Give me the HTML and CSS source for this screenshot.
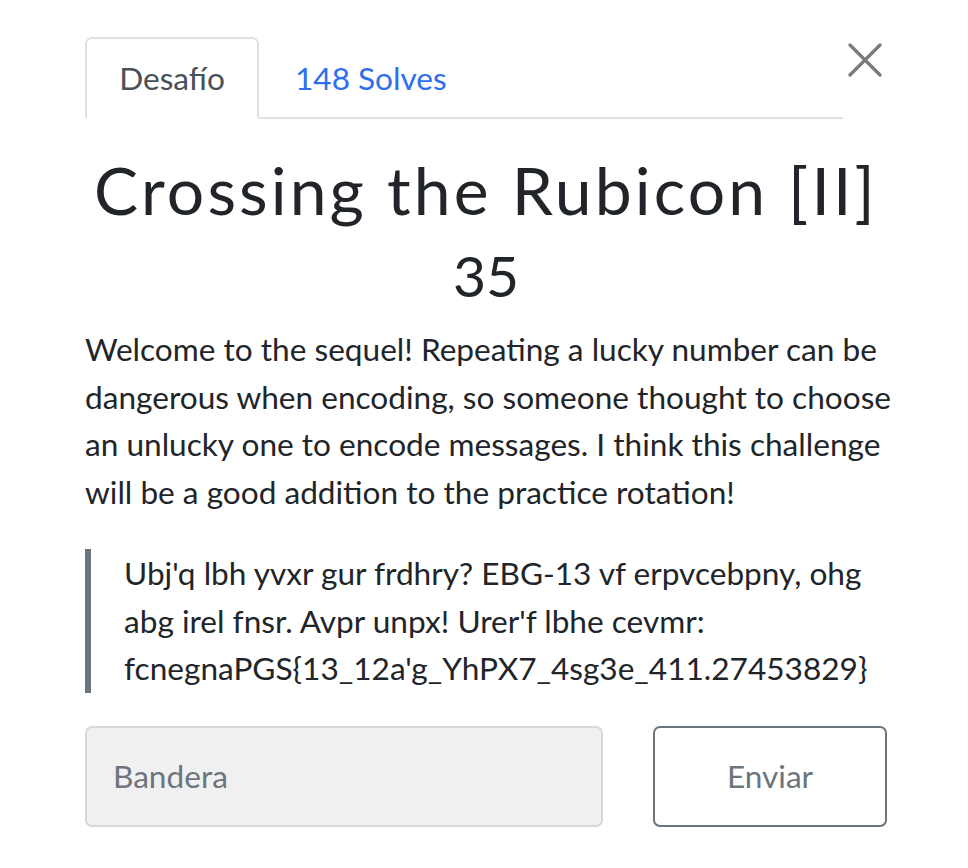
FILE: index.html
```html
<!DOCTYPE html>
<html lang="es">
<head>
<meta charset="utf-8">
<link rel="stylesheet" href="styles.css">
</head>
<body>
<div class="modal">
  <div class="tabs-row">
    <ul class="tabs">
      <li class="tab active">Desafío</li>
      <li class="tab link">148 Solves</li>
    </ul>
    <button class="close" aria-label="Close">
      <svg width="34" height="34" viewBox="0 0 34 34"><path d="M2 2 L32 32 M32 2 L2 32" stroke="#7a7a7a" stroke-width="3.2" stroke-linecap="round"/></svg>
    </button>
  </div>
  <h2 class="title">Crossing the Rubicon [II]</h2>
  <h3 class="points">35</h3>
  <p class="desc">Welcome to the sequel! Repeating a lucky number can be dangerous when encoding, so someone thought to choose an unlucky one to encode messages. I think this challenge will be a good addition to the practice rotation!</p>
  <blockquote class="quote">Ubj'q lbh yvxr gur frdhry? EBG-13 vf erpvcebpny, ohg abg irel fnsr. Avpr unpx! Urer'f lbhe cevmr: fcnegnaPGS{13_12a'g_YhPX7_4sg3e_411.27453829}</blockquote>
  <form class="submit-row">
    <input class="flag" type="text" placeholder="Bandera">
    <button class="send" type="button">Enviar</button>
  </form>
</div>
</body>
</html>
```

FILE: styles.css
```css
* { box-sizing: border-box; }
html, body { margin: 0; padding: 0; background: #fff; }
body {
  font-family: Lato, "Noto Sans", sans-serif;
  color: #212529;
}
.modal {
  width: 968px;
  padding: 37px 81px 0 85px;
}
.tabs-row {
  display: flex;
  align-items: flex-start;
}
.tabs {
  list-style: none;
  margin: 0;
  padding: 0;
  display: flex;
  width: 758px;
  border-bottom: 2px solid #dee2e6;
}
.tab {
  height: 82px;
  padding: 0 36px;
  font-size: 31.6px;
  display: flex;
  align-items: center;
  margin-bottom: -2px;
}
.tab.active {
  color: #495057;
  border: 2px solid #dee2e6;
  border-bottom-color: #fff;
  border-radius: 7px 7px 0 0;
  width: 174px;
  justify-content: center;
  padding: 0;
}
.tab.link {
  color: #2f6fee;
}
.close {
  margin-left: 4px;
  margin-top: 5px;
  background: none;
  border: 0;
  padding: 0;
  width: 36px;
  height: 36px;
  display: flex;
  align-items: center;
  justify-content: center;
}
.title {
  margin: 31px 0 0;
  text-align: center;
  font-size: 66px;
  font-weight: 400;
  letter-spacing: 3.1px;
  line-height: 80px;
}
.points {
  margin: 15px 0 0;
  text-align: center;
  font-size: 57px;
  font-weight: 400;
  line-height: 60px;
}
.desc {
  margin: 21px -10px 0 0;
  font-size: 31.6px;
  line-height: 47.5px;
}
.quote {
  margin: 33px 0 0;
  padding: 1px 0 0 33px;
  border-left: 6px solid #6c757d;
  font-size: 31.6px;
  line-height: 47.5px;
}
.submit-row {
  margin: 33px 0 0;
  display: flex;
  gap: 50px;
}
.flag {
  width: 518px;
  height: 101px;
  background: #f0f0f0;
  border: 2px solid #d5d9dd;
  border-radius: 7px;
  padding: 0 26px;
  font-family: inherit;
  font-size: 31.6px;
  color: #495057;
}
.flag::placeholder { color: #6c757d; }
.send {
  width: 234px;
  height: 101px;
  background: #fff;
  border: 2px solid #6c757d;
  border-radius: 7px;
  font-family: inherit;
  font-size: 31.6px;
  color: #6c757d;
}
```
